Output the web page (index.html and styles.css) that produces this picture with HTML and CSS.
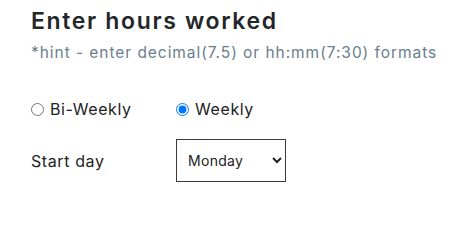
FILE: index.html
```html
<!DOCTYPE html>
<html>
<head>
<meta charset="utf-8">
<link rel="stylesheet" href="styles.css">
</head>
<body>
<div class="panel">
  <h2 class="title">Enter hours worked</h2>
  <p class="hint">*hint - enter decimal(7.5) or hh:mm(7:30) formats</p>
  <div class="grid">
    <label class="radio"><input type="radio" name="period">Bi-Weekly</label>
    <label class="radio"><input type="radio" name="period" checked>Weekly</label>
    <span class="label">Start day</span>
    <select class="select">
      <option>Monday</option>
      <option>Tuesday</option>
      <option>Wednesday</option>
    </select>
  </div>
</div>
</body>
</html>
```

FILE: styles.css
```css
html, body {
  margin: 0;
  background: #fff;
}
body {
  font-family: Inter, "Noto Sans", sans-serif;
  color: #222;
}
.panel {
  padding: 7px 0 0 31px;
}
.title {
  margin: 0;
  font-size: 23px;
  font-weight: 600;
  line-height: 28px;
  letter-spacing: 1.65px;
  color: #24272a;
}
.hint {
  margin: 8px 0 0;
  font-size: 15.5px;
  line-height: 20px;
  letter-spacing: 0.95px;
  color: #6b7e8b;
}
.grid {
  display: grid;
  grid-template-columns: 145px auto;
  align-items: center;
  row-gap: 20px;
  margin-top: 36px;
}
.radio {
  display: flex;
  align-items: center;
  font-size: 16px;
  line-height: 20px;
  letter-spacing: 0.6px;
}
.radio input {
  margin: 0 6px 0 0;
  width: 13px;
  height: 13px;
}
.label {
  font-size: 16px;
  line-height: 20px;
  letter-spacing: 0.6px;
}
.select {
  justify-self: start;
  width: 110px;
  height: 43px;
  font-family: Inter, sans-serif;
  font-size: 14px;
  letter-spacing: 0.3px;
  padding: 0 7px;
  border: 1px solid #3a3a3a;
  border-radius: 0;
  background: #fff;
  color: #222;
}
```
